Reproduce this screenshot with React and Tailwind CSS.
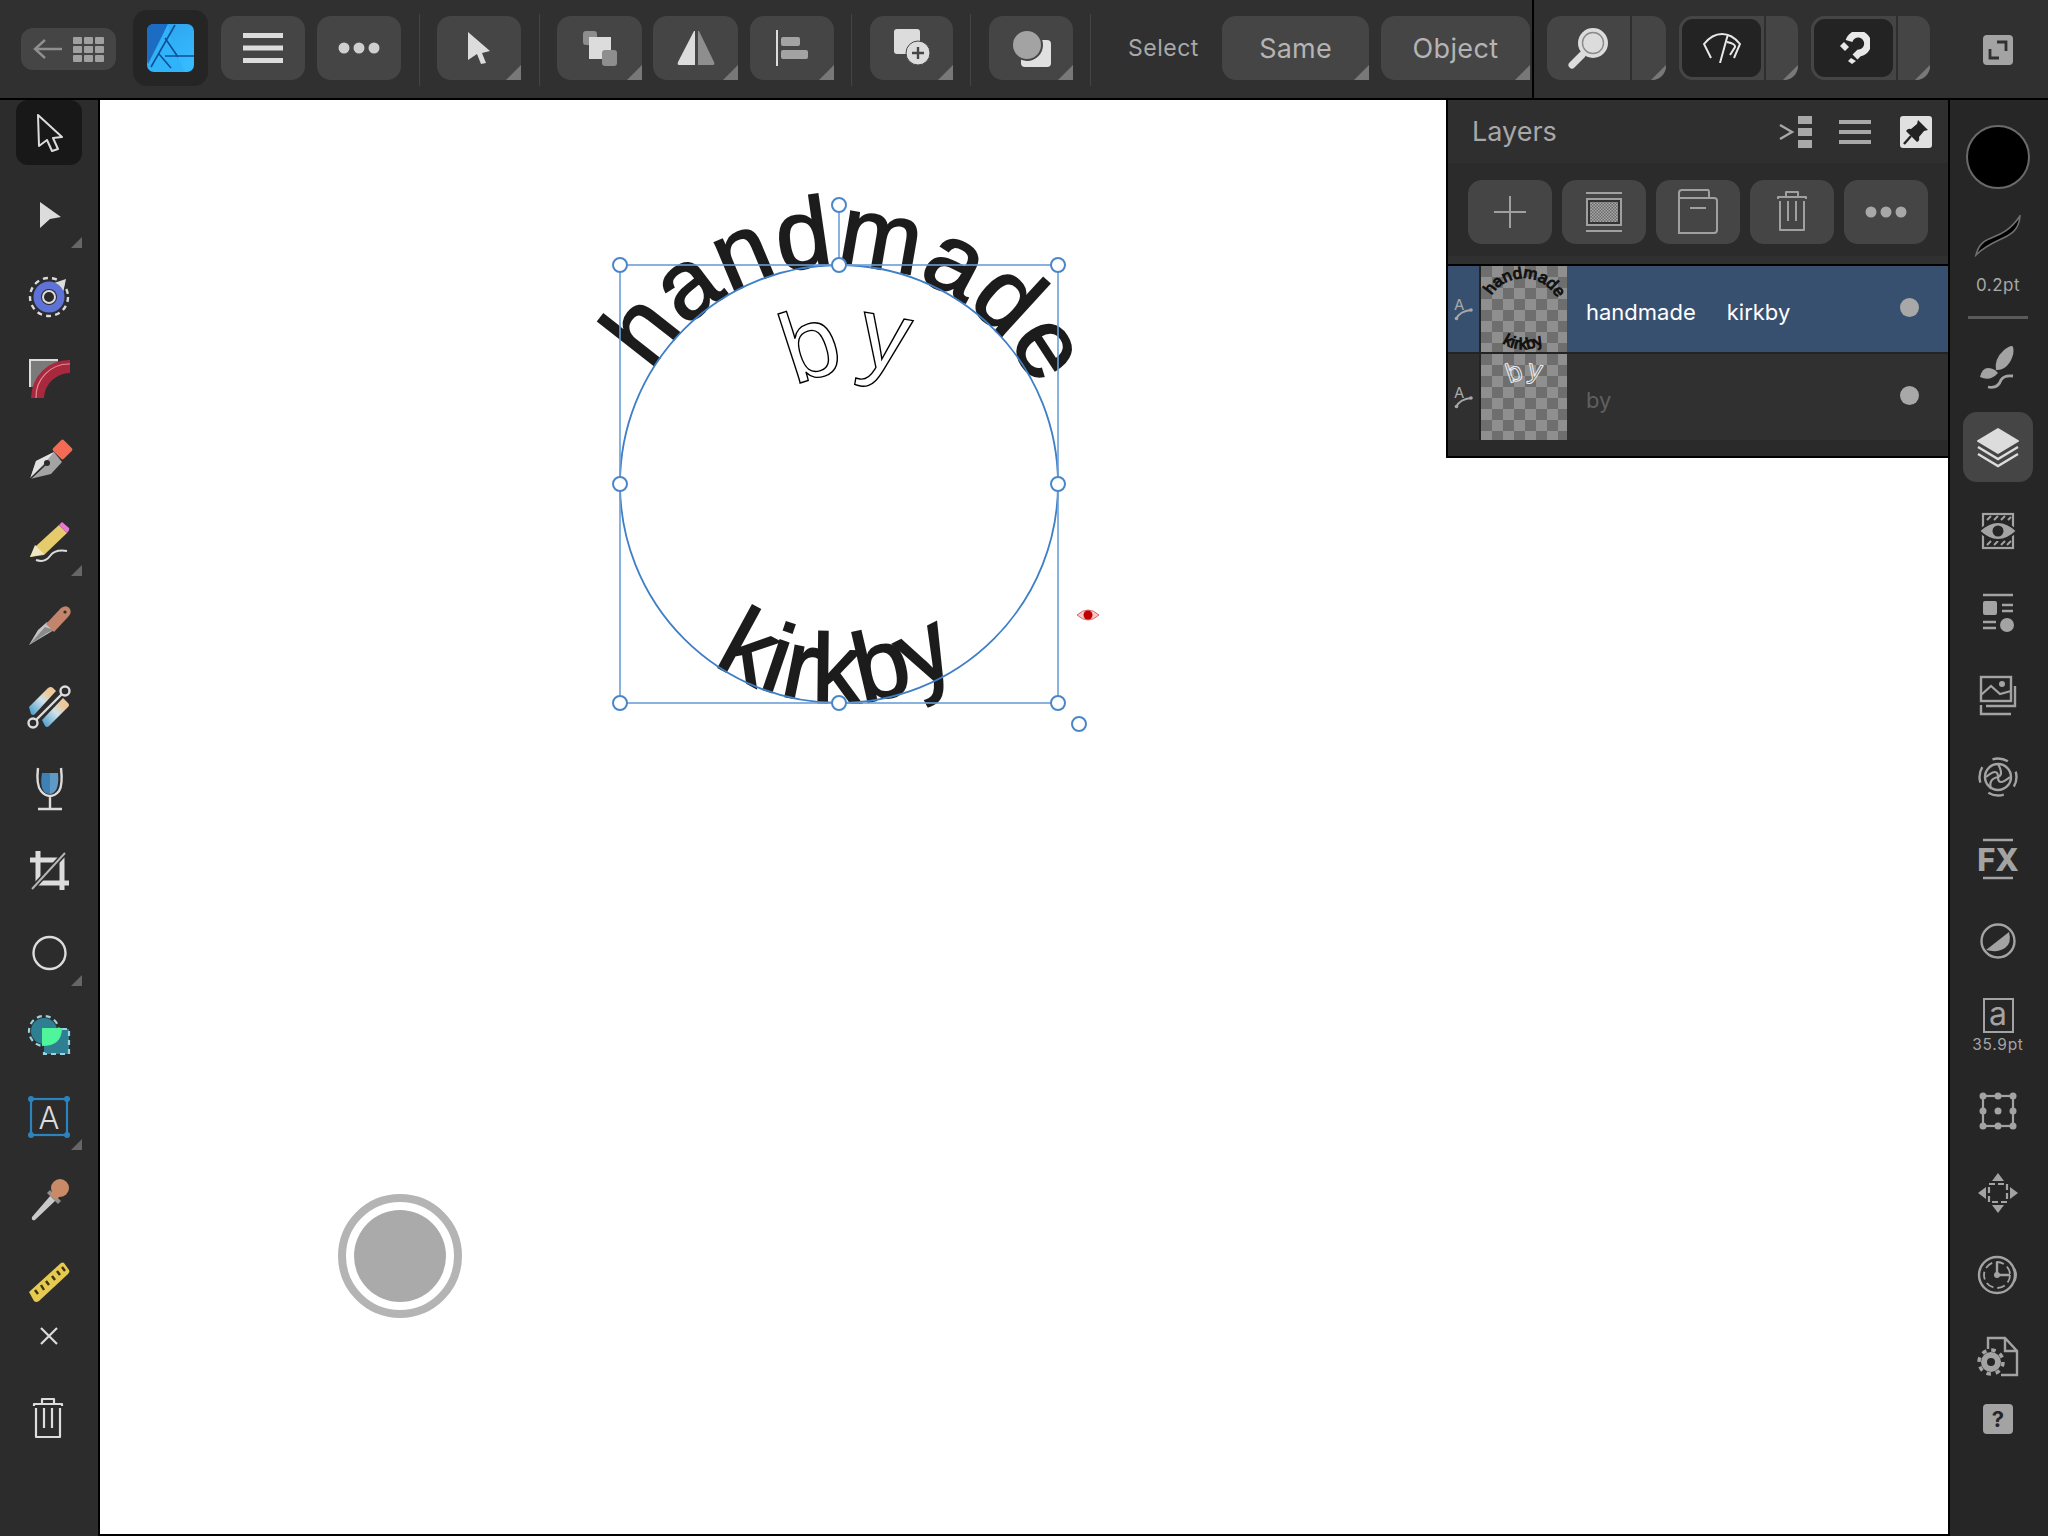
import React from 'react';

const UI = { fontFamily: 'Inter, "Liberation Sans", sans-serif' };

const Ico = ({ size = 48, box = 48, className = '', children }) => (
    <svg width={size} height={size} viewBox={`0 0 ${box} ${box}`} className={className} fill="none">
        {children}
    </svg>
);

const Corner = () => (
    <span className="absolute bottom-0 right-0 w-[15px] h-[15px] bg-[#787878] [clip-path:polygon(100%_0,100%_100%,0_100%)]" />
);

const MiniCorner = () => (
    <span className="absolute left-[71px] top-[63px] w-[11px] h-[11px] bg-[#666] [clip-path:polygon(100%_0,100%_100%,0_100%)]" />
);

const Sep = ({ className = '' }) => <div className={`w-px h-[72px] bg-[#454545] shrink-0 ${className}`} />;

const Btn = ({ className = '', corner = true, children }) => (
    <div className={`relative h-16 shrink-0 bg-[#454545] rounded-[14px] flex items-center justify-center ${className}`}>
        {children}
        {corner && <Corner />}
    </div>
);

const SplitBtn = ({ className = '', active = false, children }) => (
    <div className={`relative h-16 w-[119px] shrink-0 bg-[#454545] rounded-[14px] flex overflow-hidden ${className}`}>
        <div
            className={`w-[85px] flex items-center justify-center ${
                active
                    ? 'bg-[#232323] border-[3px] border-[#454545] rounded-[14px]'
                    : 'border-r-2 border-[#2f2f2f]'
            }`}
        >
            {children}
        </div>
        {active && <div className="w-[2px] bg-[#2f2f2f]" />}
        <Corner />
    </div>
);

const AffinityLogo = () => (
    <svg width="47" height="48" viewBox="0 0 47 48">
        <defs>
            <linearGradient id="afLogo" x1="0" y1="0" x2="0.6" y2="1">
                <stop offset="0" stopColor="#2aa0ec" />
                <stop offset="1" stopColor="#37bbff" />
            </linearGradient>
        </defs>
        <rect width="47" height="48" rx="7" fill="url(#afLogo)" />
        <path d="M0 7 Q0 0 7 0 H21 L1 40 Q0 38 0 34 Z" fill="#1c6cc4" />
        <path d="M21 0 L3 40 Q4 48 10 48 H38 L25 20 Z" fill="#2fb4fb" />
        <path d="M4 43 L28 1 M18 32 H47 M12 30 L24 44 M18 14 L31 33" stroke="#0f4f96" strokeWidth="1.6" fill="none" />
    </svg>
);

const Hamburger = ({ w = 40, h = 30, bar = 5, color = '#dcdcdc' }) => (
    <svg width={w} height={h} viewBox={`0 0 ${w} ${h}`}>
        <rect width={w} height={bar} fill={color} />
        <rect y={(h - bar) / 2} width={w} height={bar} fill={color} />
        <rect y={h - bar} width={w} height={bar} fill={color} />
    </svg>
);

const Dots = ({ color = '#cfcfcf' }) => (
    <svg width="42" height="14" viewBox="0 0 42 14">
        <circle cx="6" cy="7" r="5.5" fill={color} />
        <circle cx="21" cy="7" r="5.5" fill={color} />
        <circle cx="36" cy="7" r="5.5" fill={color} />
    </svg>
);

const toolIcons = {
    move: (
        <path d="M13 6 L37 28 L28 29 L33 40 L27 42 L22 31 L14 37 Z" fill="#181818" stroke="#dcdcdc" strokeWidth="2" strokeLinejoin="round" />
    ),
    node: <path d="M15 11 L36 26 L25 28 L15 37 Z" fill="#dcdcdc" />,
    contour: (
        <>
            <path d="M29 10 L41 6 L38 20 Z" fill="#dcdcdc" />
            <circle cx="24" cy="24" r="19" stroke="#dcdcdc" strokeWidth="2.4" strokeDasharray="5 4.2" />
            <circle cx="24" cy="24" r="15.5" fill="#5f72d8" />
            <circle cx="24" cy="24" r="8" fill="#2a2a2a" />
            <circle cx="24" cy="24" r="6" fill="#2a2a2a" stroke="#dcdcdc" strokeWidth="2" />
        </>
    ),
    corner: (
        <>
            <path d="M5 32 V6 H33 L33 8 L8 32 Z" fill="#7a7a7a" />
            <path d="M5 32 V5 H33" stroke="#dcdcdc" strokeWidth="2" />
            <path d="M6 43 A 38 38 0 0 1 45 5 V 18 A 26 26 0 0 0 19 43 Z" fill="#a8283e" />
            <path d="M11 43 A 33 33 0 0 1 45 9" stroke="#e58a96" strokeWidth="1.2" />
        </>
    ),
    pen: (
        <>
            <path d="M5 42 L11 24 L29 15 L37 25 L26 37 Z" fill="#a3a3a3" />
            <path d="M5 42 L11 24 L29 15 L24 21 Z" fill="#e2e2e2" />
            <path d="M5 42 L21 27" stroke="#2a2a2a" strokeWidth="1.6" />
            <circle cx="22" cy="26" r="3" fill="#2a2a2a" />
            <rect x="30" y="5" width="15" height="15" rx="2" transform="rotate(45 37.5 12.5)" fill="#f46a53" />
        </>
    ),
    pencil: (
        <>
            <path d="M5 38 L11 27 L34 6 L42 14 L19 36 Z" fill="#e5cb6c" />
            <path d="M5 38 L10 26 L19 35 Z" fill="#efe6c4" />
            <path d="M34 6 L37 3 L44 9 Q45 11 42 14 Z" fill="#e878d2" />
            <path d="M11 41 Q20 44 25 37 T42 32" stroke="#dcdcdc" strokeWidth="2" />
        </>
    ),
    knife: (
        <>
            <path d="M4 44 L13 29 L22 21 L29 29 Z" fill="#c4c4c4" />
            <path d="M4 44 L22 32 L29 29 L20 26 Z" fill="#8a8a8a" />
            <path d="M21 23 L36 7 Q42 3 45 8 Q47 12 43 16 L29 31 Z" fill="#c2846a" />
            <circle cx="40" cy="11" r="1.6" fill="#3a2a24" />
        </>
    ),
    erase: (
        <>
            <defs>
                <linearGradient id="erA" x1="1" y1="0" x2="0" y2="1">
                    <stop offset="0.25" stopColor="#ecc99a" />
                    <stop offset="0.5" stopColor="#cfe2ea" />
                    <stop offset="1" stopColor="#3d95c8" />
                </linearGradient>
            </defs>
            <path d="M4 24 L23 5 Q26 3 28 5 L31 8 L10 31 Q8 33 6 31 Z" fill="url(#erA)" />
            <path d="M17 37 L38 15 L43 20 Q45 22 43 24 L24 43 Q22 45 20 43 Z" fill="url(#erA)" />
            <path d="M11 37 L37 11" stroke="#2c2c2c" strokeWidth="6" />
            <path d="M11 37 L37 11" stroke="#dcdcdc" strokeWidth="2.4" />
            <circle cx="8" cy="40" r="4.5" fill="#2c2c2c" stroke="#dcdcdc" strokeWidth="2.4" />
            <circle cx="40" cy="8" r="4.5" fill="#2c2c2c" stroke="#dcdcdc" strokeWidth="2.4" />
        </>
    ),
    glass: (
        <>
            <path d="M17 8 H33 Q34 20 31 25 Q28 29 25 29 Q20 29 18 25 Q15 20 17 8 Z" fill="#3f81b5" />
            <path d="M25 8 H33 Q34 20 31 25 Q28 29 25 29 Z" fill="#7fb2d8" opacity="0.5" />
            <path d="M13 3 Q11 20 16 26 Q20 31 25 31 Q30 31 34 26 Q38 20 36 3 M25 31 V43 M13 44 H37" stroke="#dcdcdc" strokeWidth="2.4" />
        </>
    ),
    crop: (
        <>
            <path d="M5 13 H37 V43 M13 4 V36 H44" stroke="#dcdcdc" strokeWidth="5" />
            <path d="M6 43 L41 5" stroke="#2c2c2c" strokeWidth="5" />
            <path d="M7 42 L40 6" stroke="#b5b5b5" strokeWidth="2" />
        </>
    ),
    circle: <circle cx="24.5" cy="24" r="16" stroke="#dcdcdc" strokeWidth="2.4" />,
    fill: (
        <>
            <circle cx="19" cy="20" r="13" fill="#2f7f93" />
            <circle cx="19" cy="20" r="15" stroke="#9ad3e0" strokeWidth="2.2" strokeDasharray="5 4" />
            <rect x="19" y="18" width="25" height="25" fill="#2f7f93" />
            <path d="M37 18 H44 V43 H19 V37" stroke="#9ad3e0" strokeWidth="2.2" strokeDasharray="5 4" />
            <path d="M17 17 H37 Q37 35 17 35 Z" fill="#4ff59a" />
        </>
    ),
    text: (
        <>
            <rect x="6" y="6" width="36" height="36" stroke="#2d83bd" strokeWidth="2.2" />
            {[[6, 6], [42, 6], [6, 42], [42, 42]].map(([x, y]) => (
                <circle key={`${x}-${y}`} cx={x} cy={y} r="3" fill="#2d83bd" />
            ))}
            <text x="24" y="36" textAnchor="middle" fontSize="31" fill="#dcdcdc" fontFamily="Inter, sans-serif" fontWeight="300">A</text>
        </>
    ),
    dropper: (
        <>
            <path d="M7 42 L26 20 L31 25 L10 45 Q6 46 7 42 Z" fill="#c9c9c9" />
            <path d="M22 18 L33 29 L36 26 L25 15 Z" fill="#8f8f8f" />
            <circle cx="35" cy="13" r="9" fill="#c98a67" />
            <path d="M27 17 L33 23" stroke="#c98a67" strokeWidth="6" />
        </>
    ),
    ruler: (
        <>
            <path d="M4 35 L36 6 Q38 5 39 6 L44 13 Q45 15 43 17 L14 44 Q11 46 9 44 Z" fill="#e6c94f" />
            <path d="M13 37 L10 33 M19 33 L16 28 M24 28 L21 24 M30 23 L27 19 M35 18 L32 14 M40 14 L37 10" stroke="#3a3116" strokeWidth="2.4" />
        </>
    ),
};

const Tool = ({ name, corner = false }) => (
    <div className="relative w-full h-[82px] flex items-center justify-center shrink-0">
        <Ico>{toolIcons[name]}</Ico>
        {corner && <MiniCorner />}
    </div>
);

const Trash = ({ color = '#dcdcdc', stroke = 2.2 }) => (
    <Ico>
        <path
            d="M10 11 V9 H38 V11 M18 8 V4 H30 V8 M12 13 V42 H36 V13 M20 13 V33 M28 13 V33"
            stroke={color}
            strokeWidth={stroke}
            strokeLinejoin="round"
        />
    </Ico>
);

const LeftBar = () => (
    <aside className="w-[100px] shrink-0 bg-[#2c2c2c] border-r-2 border-black flex flex-col items-center">
        <div className="w-[66px] h-[65px] bg-[#181818] rounded-xl flex items-center justify-center shrink-0">
            <Ico>{toolIcons.move}</Ico>
        </div>
        <div className="w-full mt-[9px]">
            <Tool name="node" corner />
            <Tool name="contour" />
            <Tool name="corner" />
            <Tool name="pen" />
            <Tool name="pencil" corner />
            <Tool name="knife" />
            <Tool name="erase" />
            <Tool name="glass" />
            <Tool name="crop" />
            <Tool name="circle" corner />
            <Tool name="fill" />
            <Tool name="text" corner />
            <Tool name="dropper" />
            <Tool name="ruler" />
        </div>
        <div className="h-7 flex items-center justify-center shrink-0">
            <svg width="22" height="22" viewBox="0 0 22 22">
                <path d="M3 3 L19 19 M19 3 L3 19" stroke="#dcdcdc" strokeWidth="2.2" />
            </svg>
        </div>
        <div className="mt-[45px] -ml-[2px]">
            <Trash />
        </div>
    </aside>
);

const TopBar = () => (
    <header className="h-[100px] shrink-0 bg-[#303030] border-b-2 border-black flex items-start pt-4">
        <div className="ml-[21px] mt-3 w-[95px] h-[42px] rounded-[12px] bg-[#454545] flex items-center justify-center gap-[11px] shrink-0">
            <svg width="29" height="22" viewBox="0 0 29 22">
                <path d="M12 2 L2 11 L12 20 M2 11 H29" stroke="#8f8f8f" strokeWidth="2.4" fill="none" />
            </svg>
            <div className="grid grid-cols-3 gap-[2px] w-[32px]">
                {Array.from({ length: 9 }).map((_, i) => (
                    <span key={i} className="h-[7px] rounded-[1px] bg-[#a0a0a0]" />
                ))}
            </div>
        </div>
        <div className="ml-[17px] -mt-[6px] w-[75px] h-[76px] rounded-[14px] bg-[#252525] flex items-center justify-center shrink-0">
            <AffinityLogo />
        </div>
        <Btn className="ml-[13px] w-[84px]" corner={false}>
            <Hamburger />
        </Btn>
        <Btn className="ml-3 w-[84px]" corner={false}>
            <Dots />
        </Btn>
        <Sep className="ml-[18px] -mt-[2px]" />
        <Btn className="ml-[17px] w-[84px]">
            <svg width="24" height="32" viewBox="0 0 24 32">
                <path d="M1 0 L23 19 L15 21 L19 31 L14 32 L10 22 L1 28 Z" fill="#dcdcdc" />
            </svg>
        </Btn>
        <Sep className="ml-[18px] -mt-[2px]" />
        <Btn className="ml-[17px] w-[85px]">
            <svg width="36" height="36" viewBox="0 0 36 36">
                <rect x="1" y="1" width="14" height="14" rx="3" fill="#8e8e8e" />
                <rect x="7" y="7" width="22" height="22" fill="#dcdcdc" />
                <rect x="20" y="20" width="15" height="16" rx="3" fill="#8e8e8e" />
            </svg>
        </Btn>
        <Btn className="ml-[11px] w-[85px]">
            <svg width="38" height="36" viewBox="0 0 38 36">
                <path d="M17 1 L18 1 V35 H2 Q0 35 1 32 Z" fill="#dcdcdc" />
                <path d="M21 1 L22 1 L37 32 Q38 35 36 35 H21 Z" fill="#8e8e8e" />
            </svg>
        </Btn>
        <Btn className="ml-3 w-[84px]">
            <svg width="32" height="36" viewBox="0 0 32 36">
                <rect x="0" y="0" width="2" height="36" fill="#dcdcdc" />
                <rect x="5" y="7" width="19" height="9" rx="2" fill="#a3a3a3" />
                <rect x="5" y="20" width="27" height="9" rx="2" fill="#a3a3a3" />
            </svg>
        </Btn>
        <Sep className="ml-[17px] -mt-[2px]" />
        <Btn className="ml-[18px] w-[83px]">
            <svg width="40" height="38" viewBox="0 0 40 38">
                <rect x="2" y="0" width="26" height="25" rx="3" fill="#dcdcdc" />
                <circle cx="26" cy="24" r="12" fill="#dcdcdc" stroke="#454545" strokeWidth="1" />
                <path d="M26 18 V30 M20 24 H32" stroke="#454545" strokeWidth="2.4" />
            </svg>
        </Btn>
        <Sep className="ml-[17px] -mt-[2px]" />
        <Btn className="ml-[18px] w-[84px]">
            <svg width="40" height="38" viewBox="0 0 40 38">
                <rect x="10" y="11" width="30" height="27" rx="4" fill="#e0e0e0" />
                <circle cx="16" cy="16" r="15" fill="#a3a3a3" stroke="#454545" strokeWidth="2" />
            </svg>
        </Btn>
        <Sep className="ml-[17px] -mt-[2px]" />
        <span className="ml-[37px] w-[94px] h-16 flex items-center text-[23px] tracking-[0.5px] text-[#a8a8a8] shrink-0">Select</span>
        <Btn className="w-[147px] pt-[2px] text-[27px] tracking-[0.2px] text-[#b4b4b4]">Same</Btn>
        <Btn className="ml-3 w-[149px] pt-[2px] text-[27px] tracking-[0.4px] text-[#b4b4b4]">Object</Btn>
        <div className="ml-[2px] -mt-4 w-[2px] h-[98px] bg-black shrink-0" />
        <SplitBtn className="ml-[13px]">
            <svg width="44" height="44" viewBox="0 0 44 44">
                <circle cx="26" cy="17" r="15" fill="#dcdcdc" />
                <circle cx="26" cy="17" r="10.5" fill="#dcdcdc" stroke="#8a8a8a" strokeWidth="1.4" />
                <path d="M15 29 L5 39" stroke="#dcdcdc" strokeWidth="7" strokeLinecap="round" />
            </svg>
        </SplitBtn>
        <SplitBtn className="ml-[13px]" active>
            <svg width="40" height="30" viewBox="0 0 40 30">
                <path d="M9 25 L2 11 Q10 1 20 1 Q30 1 38 11 L32 25 M26 1 L18 30 M25 9 Q34 11 33 14 L28 22" stroke="#e8e8e8" strokeWidth="2" fill="none" />
            </svg>
        </SplitBtn>
        <SplitBtn className="ml-[13px]" active>
            <svg width="32" height="32" viewBox="0 0 32 32">
                <path d="M11 9 A 9.5 9.5 0 1 1 21 21 L17 25" stroke="#e8e8e8" strokeWidth="7" fill="none" />
                <path d="M6 10 L11 15 L7 19 L2 14 Z M13 26 L18 29 L14 32 L10 29 Z" fill="#e8e8e8" />
            </svg>
        </SplitBtn>
        <div className="ml-[53px] mt-[19px] w-[30px] h-[30px] rounded-[4px] bg-[#a3a3a3] flex items-center justify-center shrink-0">
            <svg width="20" height="20" viewBox="0 0 20 20">
                <path d="M9 2 H18 V11 M2 9 V18 H11" stroke="#303030" strokeWidth="2.8" fill="none" />
            </svg>
        </div>
    </header>
);

const panelIcons = {
    persona: (
        <>
            <rect x="9" y="7" width="30" height="34" stroke="#a3a3a3" strokeWidth="2.2" />
            <path d="M13 13 L17 9 M20 13 L24 9 M27 13 L31 9 M34 13 L37 10 M13 38 L17 34 M20 38 L24 34 M27 38 L31 34 M33 38 L37 34" stroke="#a3a3a3" strokeWidth="2" />
            <path d="M5 24 Q24 6 43 24 Q24 42 5 24 Z" fill="#a3a3a3" stroke="#262626" strokeWidth="2" />
            <circle cx="24" cy="24" r="5.5" fill="#262626" />
        </>
    ),
    adjust: (
        <>
            <path d="M9 6 H39 M28 16 H39 M28 22 H39 M9 33 H22 M9 39 H22" stroke="#a3a3a3" strokeWidth="2.4" />
            <rect x="9" y="12" width="14" height="14" rx="2" fill="#a3a3a3" />
            <circle cx="33" cy="36" r="7" fill="#a3a3a3" />
        </>
    ),
    stock: (
        <>
            <rect x="7" y="6" width="30" height="24" stroke="#a3a3a3" strokeWidth="2.4" />
            <path d="M7 24 L17 15 L26 23 L37 20" stroke="#a3a3a3" strokeWidth="2.2" />
            <circle cx="28" cy="13" r="3" fill="#a3a3a3" />
            <path d="M41 15 V35 H12 M7 34 V43 H37" stroke="#a3a3a3" strokeWidth="2.4" />
        </>
    ),
    aperture: (
        <>
            <circle cx="24" cy="24" r="13" stroke="#a3a3a3" strokeWidth="2.4" />
            <path d="M12 24 Q24 14 24 24 Q24 34 36 24 M24 11 Q30 22 24 24 Q14 26 17 36" stroke="#a3a3a3" strokeWidth="2.2" />
            <circle cx="24" cy="24" r="18.5" stroke="#a3a3a3" strokeWidth="2.4" strokeDasharray="16 13" strokeDashoffset="6" />
        </>
    ),
    fx: (
        <>
            <path d="M9 5 H39 M9 43 H39" stroke="#a3a3a3" strokeWidth="2.4" />
            <text x="24" y="36" textAnchor="middle" fontSize="31" fontWeight="800" fill="#a3a3a3" fontFamily="Inter, sans-serif">FX</text>
        </>
    ),
    tone: (
        <>
            <circle cx="24" cy="24" r="16.5" stroke="#a3a3a3" strokeWidth="2.4" />
            <path d="M35 15 Q38 26 31 31 Q24 36 12 33 Z" fill="#a3a3a3" />
        </>
    ),
    transform: (
        <>
            <rect x="9" y="9" width="30" height="30" stroke="#a3a3a3" strokeWidth="2.2" />
            {[[9, 9], [24, 9], [39, 9], [9, 24], [39, 24], [9, 39], [24, 39], [39, 39], [24, 24]].map(([x, y]) => (
                <circle key={`${x}-${y}`} cx={x} cy={y} r="3.5" fill="#a3a3a3" />
            ))}
        </>
    ),
    move: (
        <>
            <rect x="15" y="15" width="18" height="18" stroke="#a3a3a3" strokeWidth="2.2" strokeDasharray="6 3" />
            <path d="M24 4 L30 12 H18 Z M24 44 L30 36 H18 Z M4 24 L12 18 V30 Z M44 24 L36 18 V30 Z" fill="#a3a3a3" />
        </>
    ),
    clock: (
        <>
            <circle cx="23" cy="24" r="18" stroke="#a3a3a3" strokeWidth="2.4" />
            <circle cx="23" cy="24" r="13" stroke="#a3a3a3" strokeWidth="1.8" strokeDasharray="8 4" />
            <path d="M23 11 V24 H36" stroke="#a3a3a3" strokeWidth="2.4" />
            <circle cx="23" cy="24" r="3" fill="#a3a3a3" />
            <path d="M41 17 Q45 24 41 31 Z" fill="#a3a3a3" />
        </>
    ),
    docs: (
        <>
            <path d="M14 16 V5 H31 L43 18 V42 H27 M31 5 V18 H43" stroke="#a3a3a3" strokeWidth="2.4" />
            <circle cx="17" cy="29" r="10" fill="#a3a3a3" />
            <circle cx="17" cy="29" r="12" stroke="#a3a3a3" strokeWidth="3.5" strokeDasharray="4.5 4.9" />
            <circle cx="17" cy="29" r="4" fill="#262626" />
        </>
    ),
    brush: (
        <>
            <path d="M22 27 Q20 16 30 7 Q38 1 39 4 Q41 10 36 19 Q30 28 22 27 Z" fill="#a3a3a3" />
            <path d="M21 27 Q9 21 6 34 Q16 39 24 30 Z" fill="#a3a3a3" />
            <path d="M14 44 Q24 46 27 37 Q30 32 39 33" stroke="#a3a3a3" strokeWidth="2.8" />
        </>
    ),
    layers: (
        <>
            <path d="M4 31 L24 43 L44 31" stroke="#dcdcdc" strokeWidth="2.4" />
            <path d="M4 24 L24 36 L44 24" stroke="#dcdcdc" strokeWidth="2.4" />
            <path d="M4 18 L24 6 L44 18 L24 30 Z" fill="#dcdcdc" stroke="#dcdcdc" strokeWidth="2" strokeLinejoin="round" />
        </>
    ),
};

const Slot = ({ name }) => (
    <div className="h-[82px] w-full flex items-center justify-center shrink-0">
        <Ico>{panelIcons[name]}</Ico>
    </div>
);

const RightBar = () => (
    <aside className="w-[100px] shrink-0 bg-[#262626] border-l-2 border-black flex flex-col items-center pt-[25px] pr-[2px]">
        <div className="w-[64px] h-[64px] rounded-full bg-black border-2 border-[#6a6a6a] shrink-0" />
        <svg width="48" height="42" viewBox="0 0 48 42" className="mt-[26px] shrink-0">
            <path d="M2 40 C 8 16, 26 30, 46 1 C 44 26, 22 20, 2 40 Z" fill="#000" stroke="#707070" strokeWidth="1.6" />
        </svg>
        <span className="mt-4 h-6 text-[17px] leading-6 tracking-[0.5px] text-[#a8a8a8]">0.2pt</span>
        <div className="mt-[19px] w-[60px] h-[3px] bg-[#5a5a5a] shrink-0" />
        <div className="mt-6 shrink-0">
            <Ico>{panelIcons.brush}</Ico>
        </div>
        <div className="mt-[21px] w-[70px] h-[70px] rounded-[14px] bg-[#454545] flex items-center justify-center shrink-0">
            <Ico>{panelIcons.layers}</Ico>
        </div>
        <div className="mt-2 w-full">
            <Slot name="persona" />
            <Slot name="adjust" />
            <Slot name="stock" />
            <Slot name="aperture" />
            <Slot name="fx" />
            <Slot name="tone" />
        </div>
        <div className="mt-4 w-[31px] h-[35px] border-2 border-[#a3a3a3] flex items-center justify-center text-[32px] leading-none pb-1 text-[#a3a3a3] shrink-0">
            a
        </div>
        <span className="mt-[2px] h-5 text-[15.5px] leading-5 tracking-[0.7px] text-[#a3a3a3]">35.9pt</span>
        <div className="mt-[15px] w-full">
            <Slot name="transform" />
            <Slot name="move" />
            <Slot name="clock" />
            <Slot name="docs" />
        </div>
        <div className="mt-[6px] w-[30px] h-[30px] rounded-[4px] bg-[#a3a3a3] flex items-center justify-center text-[22px] font-bold text-[#262626] shrink-0">
            ?
        </div>
    </aside>
);

const HeadText = ({ id, filled = '#1c1c1c', sw = 2 }) => (
    <>
        <defs>
            <path id={`${id}-top`} d="M620 484 A219 219 0 0 1 1058 484" />
            <path id={`${id}-bot`} d="M620 484 A219 219 0 0 0 1058 484" />
        </defs>
        <text fontFamily='"Liberation Sans", Arial, sans-serif' fontSize="98" fill={filled} stroke={filled} strokeWidth={sw} letterSpacing="1">
            <textPath href={`#${id}-top`} startOffset="118">handmade</textPath>
        </text>
        <text fontFamily='"Liberation Sans", Arial, sans-serif' fontSize="98" fill={filled} stroke={filled} strokeWidth={sw} letterSpacing="1">
            <textPath href={`#${id}-bot`} startOffset="210">kirkby</textPath>
        </text>
    </>
);

const ByText = ({ fill, stroke, sw }) => (
    <g fontFamily='"Liberation Sans", Arial, sans-serif' fontSize="100" fill={fill} stroke={stroke} strokeWidth={sw}>
        <text transform="translate(794 385) rotate(-18)">b</text>
        <text transform="translate(855 364) rotate(10)">y</text>
    </g>
);

const Thumb = ({ children }) => (
    <div className="w-[86px] h-[86px] shrink-0 overflow-hidden [background-image:repeating-conic-gradient(#8f8f8f_0_25%,#6e6e6e_0_50%)] [background-size:22px_22px]">
        {children}
    </div>
);

const LayerGlyph = () => (
    <svg width="20" height="24" viewBox="0 0 20 24">
        <text x="0" y="13" fontSize="15" fill="#a8a8a8" fontFamily="Inter, sans-serif">A</text>
        <path d="M2 22 Q6 14 17 13" stroke="#a8a8a8" strokeWidth="1.8" fill="none" />
        <circle cx="2.5" cy="21.5" r="1.8" fill="#a8a8a8" />
        <circle cx="17" cy="13" r="1.8" fill="#a8a8a8" />
    </svg>
);

const ToolBtn = ({ children }) => (
    <div className="w-[84px] h-16 rounded-[14px] bg-[#454545] flex items-center justify-center shrink-0">{children}</div>
);

const LayerRow = ({ active, name, thumb }) => (
    <div className={`h-[86px] flex shrink-0 ${active ? 'bg-[#37506f]' : 'bg-[#303030]'}`}>
        <div className="w-[33px] flex items-center justify-center border-r-2 border-[#232323]">
            <LayerGlyph />
        </div>
        <Thumb>{thumb}</Thumb>
        <div className={`ml-[19px] flex-1 pt-[6px] flex items-center text-[22px] ${active ? 'text-white' : 'text-[#5f5f5f]'}`}>
            {name}
        </div>
        <span className="mr-[29px] self-center -mt-1 w-[19px] h-[19px] rounded-full bg-[#a8a8a8]" />
    </div>
);

const LayersPanel = () => (
    <div className="absolute left-[1346px] top-0 right-0 h-[358px] bg-[#2a2a2a] border-l-2 border-b-2 border-black flex flex-col">
        <div className="h-[63px] bg-[#2f2f2f] flex items-center shrink-0">
            <span className="ml-[24px] pt-[2px] text-[27px] text-[#a8a8a8]">Layers</span>
            <svg width="33" height="32" viewBox="0 0 33 32" className="ml-[222px]">
                <path d="M1 9 L13 16 L1 23" stroke="#a8a8a8" strokeWidth="2.4" fill="none" />
                <rect x="19" y="0" width="14" height="8" fill="#a8a8a8" />
                <rect x="19" y="12" width="14" height="8" fill="#a8a8a8" />
                <rect x="19" y="24" width="14" height="8" fill="#a8a8a8" />
            </svg>
            <div className="ml-[27px]">
                <Hamburger w={32} h={24} bar={4} color="#a8a8a8" />
            </div>
            <div className="ml-[29px] w-[32px] h-[32px] rounded-[3px] bg-[#e0e0e0] flex items-center justify-center">
                <svg width="26" height="26" viewBox="0 0 26 26">
                    <path d="M15 1 L25 11 L21 12 L16 18 Q17 22 14 23 L3 12 Q5 9 8 10 L14 5 Z" fill="#222" />
                    <path d="M1 25 L8 17" stroke="#222" strokeWidth="2.4" />
                </svg>
            </div>
        </div>
        <div className="h-[93px] bg-[#2b2b2b] flex items-start pt-[17px] pl-5 gap-[10px] shrink-0">
            <ToolBtn>
                <svg width="34" height="34" viewBox="0 0 34 34">
                    <path d="M17 1 V33 M1 17 H33" stroke="#a0a0a0" strokeWidth="2" />
                </svg>
            </ToolBtn>
            <ToolBtn>
                <svg width="36" height="40" viewBox="0 0 36 40">
                    <defs>
                        <pattern id="dither" width="3" height="3" patternUnits="userSpaceOnUse">
                            <rect width="3" height="3" fill="#6a6a6a" />
                            <rect width="1.5" height="1.5" fill="#a8a8a8" />
                            <rect x="1.5" y="1.5" width="1.5" height="1.5" fill="#a8a8a8" />
                        </pattern>
                    </defs>
                    <path d="M0 1 H36 M0 39 H36" stroke="#a0a0a0" strokeWidth="2" />
                    <rect x="1" y="7" width="34" height="26" fill="#333" stroke="#a0a0a0" strokeWidth="2" />
                    <rect x="4" y="10" width="28" height="20" fill="url(#dither)" />
                </svg>
            </ToolBtn>
            <ToolBtn>
                <svg width="40" height="46" viewBox="0 0 40 46">
                    <path d="M1 44 V4 Q1 1 4 1 H30 Q31 1 31 4 V9 H36 Q39 9 39 12 V41 Q39 44 36 44 Z M1 9 H31 M12 19 H28" stroke="#a0a0a0" strokeWidth="2" fill="none" />
                </svg>
            </ToolBtn>
            <ToolBtn>
                <Trash color="#a0a0a0" stroke={2} />
            </ToolBtn>
            <ToolBtn>
                <Dots color="#a8a8a8" />
            </ToolBtn>
        </div>
        <div className="h-[10px] bg-[#303030] border-b-2 border-black shrink-0" />
        <LayerRow
            active
            name={
                <span className="whitespace-pre">
                    handmade<span className="ml-[31px]">kirkby</span>
                </span>
            }
            thumb={
                <svg width="86" height="86" viewBox="590 190 505 530" preserveAspectRatio="none">
                    <HeadText id="thumb" filled="#111" sw="6" />
                </svg>
            }
        />
        <div className="h-[2px] bg-[#232323] shrink-0" />
        <LayerRow
            name="by"
            thumb={
                <svg width="86" height="86" viewBox="692 277 307 318" preserveAspectRatio="none">
                    <ByText fill="none" stroke="#eee" sw="3.5" />
                </svg>
            }
        />
    </div>
);

const Handle = ({ x, y }) => <circle cx={x} cy={y} r="7" fill="#fff" stroke="#4a86c8" strokeWidth="2" />;

const Artwork = () => (
    <svg className="absolute left-[490px] top-[80px]" width="620" height="660" viewBox="590 180 620 660" fill="none">
        <HeadText id="art" />
        <ByText fill="#fff" stroke="#000" sw="1.4" />
        <circle cx="839" cy="484" r="219" stroke="#3f7fc6" strokeWidth="1.8" />
        <rect x="620" y="265" width="438" height="438" stroke="#6d9fd6" strokeWidth="1.6" />
        <path d="M839 205 V265" stroke="#6d9fd6" strokeWidth="1.6" />
        {[
            [620, 265], [839, 265], [1058, 265],
            [620, 484], [1058, 484],
            [620, 703], [839, 703], [1058, 703],
            [839, 205], [1079, 724],
        ].map(([x, y]) => (
            <Handle key={`${x}-${y}`} x={x} y={y} />
        ))}
        <path d="M1077 615 Q1088 605 1099 615 Q1088 625 1077 615 Z" fill="#f8c8c8" stroke="#d86a6a" strokeWidth="1" />
        <circle cx="1088" cy="615" r="4.5" fill="#c00000" />
    </svg>
);

const Canvas = () => (
    <main className="relative flex-1 bg-white border-b-2 border-black overflow-hidden">
        <Artwork />
        <div className="absolute left-[238px] top-[1094px] w-[124px] h-[124px] rounded-full border-8 border-[#b4b4b4] flex items-center justify-center">
            <div className="w-[92px] h-[92px] rounded-full bg-[#aaaaaa]" />
        </div>
        <LayersPanel />
    </main>
);

export default function App() {
    return (
        <div className="w-[2048px] h-[1536px] flex flex-col overflow-hidden" style={UI}>
            <TopBar />
            <div className="flex flex-1 min-h-0">
                <LeftBar />
                <Canvas />
                <RightBar />
            </div>
        </div>
    );
}
